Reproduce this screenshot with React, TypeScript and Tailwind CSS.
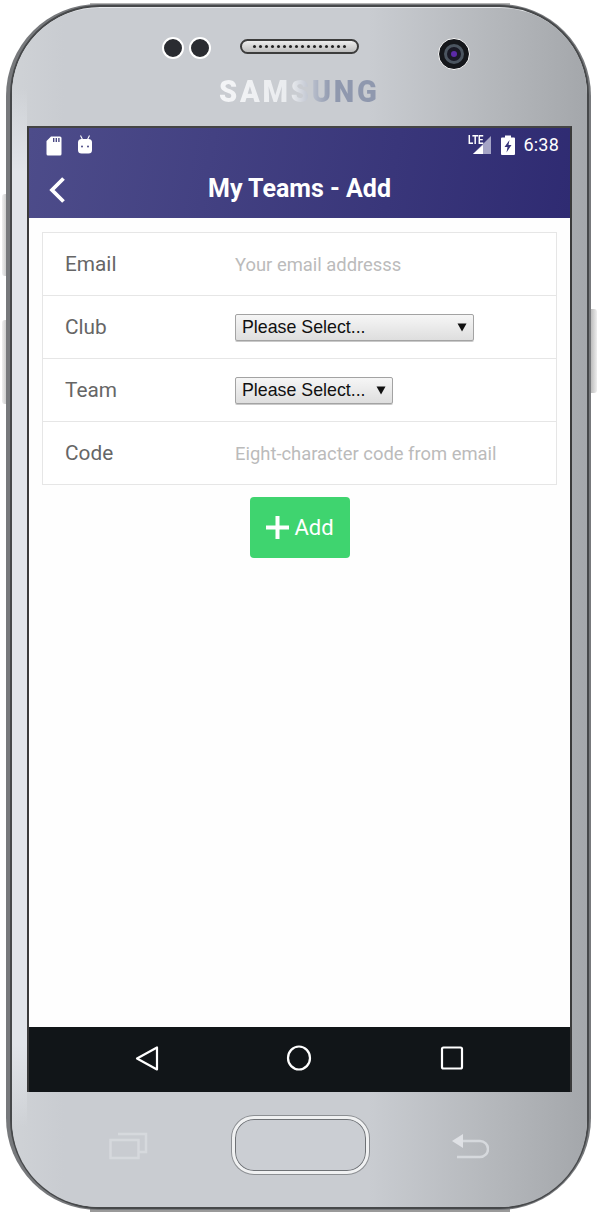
import React from "react";

const roboto = "font-['Roboto',sans-serif]";

function StatusBar() {
  return (
    <div className="flex h-[34px] items-center pl-[17px] pr-[11px]">
      <svg width="16" height="20" viewBox="0 0 16 20" className="mt-[1px]">
        <path d="M5 0.5h9a1.5 1.5 0 0 1 1.5 1.5v16a1.5 1.5 0 0 1-1.5 1.5H2A1.5 1.5 0 0 1 .5 18V5z" fill="#fff" />
        <path d="M7 2h1.4v4H7zM9.6 2H11v4H9.6zM12.2 2h1.4v4h-1.4z" fill="#4a4984" />
      </svg>
      <svg width="16" height="20" viewBox="0 0 16 20" className="ml-[15px]">
        <path d="M3.5 0.5l2 4h5l2-4" stroke="#fff" strokeWidth="1.1" fill="none" />
        <rect x="1" y="4" width="14" height="14.5" rx="3.5" fill="#fff" />
        <circle cx="5" cy="11.5" r="1" fill="#4a4984" />
        <circle cx="11" cy="11.5" r="1" fill="#4a4984" />
      </svg>
      <div className="relative ml-auto h-[20px] w-[26px]">
        <svg width="26" height="20" viewBox="0 0 26 20">
          <path d="M25 1v18H7z" fill="#a5a4c6" />
          <path d="M17 10v9H7z" fill="#fff" />
        </svg>
        <span className="absolute left-[2px] top-[-1px] origin-left scale-x-[0.8] text-[12px] leading-[13px] font-bold text-white font-['Roboto',sans-serif]">
          LTE
        </span>
      </div>
      <svg width="14" height="20" viewBox="0 0 14 20" className="ml-[9px]">
        <path d="M4 0.5h6v2h3a1 1 0 0 1 1 1V19a1 1 0 0 1-1 1H1a1 1 0 0 1-1-1V3.500a1 1 0 0 1 1-1h3z" fill="#fff" />
        <path d="M8.500 5L3.500 12h3l-1 5.500 5-7.500h-3z" fill="#37347a" />
      </svg>
      <span className={`ml-[8px] text-[18px] leading-none tracking-[0.2px] text-white ${roboto}`}>6:38</span>
    </div>
  );
}

function Row({ label, last, children }: { label: string; last?: boolean; children: React.ReactNode }) {
  return (
    <div className={`flex items-center pl-[22px] ${last ? "h-[62px]" : "h-[63px] border-b border-[#e6e6e6]"}`}>
      <span className={`w-[170px] pt-[2px] text-[20.800px] text-[#666] ${roboto}`}>{label}</span>
      {children}
    </div>
  );
}

function FakeSelect({ width }: { width: string }) {
  return (
    <div className={`relative h-[27px] ${width}`}>
      <select className="h-full w-full appearance-none rounded-[2px] border border-[#a3a3a3] bg-[linear-gradient(180deg,#f6f6f6,#dedede)] pb-[2px] pl-[6px] text-[17.800px] leading-[24px] text-[#111] font-['Liberation_Sans',sans-serif] shadow-[0_1px_0_#c9c9c9]">
        <option>Please Select...</option>
      </select>
      <svg width="10" height="9" viewBox="0 0 10 9" className="absolute right-[7px] top-[9px]">
        <path d="M0.500 0.500h9L5 8.500z" fill="#111" />
      </svg>
    </div>
  );
}

function Screen() {
  return (
    <div className="ml-[15px] flex h-[966px] w-[545px] flex-col overflow-hidden border-x-2 border-t-2 border-x-[#3a3a3a] border-t-[#444] bg-white">
      <div className="h-[90px] bg-[linear-gradient(100deg,#4d4c8a,#2f2b72)]">
        <StatusBar />
        <div className="relative flex h-[56px] items-center justify-center pb-[2px]">
          <svg width="18" height="28" viewBox="0 0 18 28" className="absolute left-[19px] top-[14px]">
            <path d="M15.500 2.500L4 14l11.500 11.500" stroke="#fff" strokeWidth="3.800" fill="none" />
          </svg>
          <span className={`text-[25px] font-bold text-white ${roboto}`}>My Teams - Add</span>
        </div>
      </div>

      <div className="flex-1 bg-[#fefefe] px-[13px] pt-[14px]">
        <div className="border border-[#e6e6e6] bg-white">
          <Row label="Email">
            <span className={`pt-[2px] text-[18.400px] text-[#bbb] ${roboto}`}>Your email addresss</span>
          </Row>
          <Row label="Club">
            <FakeSelect width="w-[239px]" />
          </Row>
          <Row label="Team">
            <FakeSelect width="w-[158px]" />
          </Row>
          <Row label="Code" last>
            <span className={`pt-[2px] text-[18.400px] text-[#bbb] ${roboto}`}>Eight-character code from email</span>
          </Row>
        </div>
        <div className="mt-[12px] flex justify-center">
          <button className={`flex h-[61px] w-[100px] items-center justify-center gap-[5px] rounded-[4px] bg-[#3fd46f] pl-[1px] text-[22px] text-white ${roboto}`}>
            <svg width="23" height="23" viewBox="0 0 23 23">
              <path d="M11.500 0v23M0 11.500h23" stroke="#fff" strokeWidth="4" />
            </svg>
            Add
          </button>
        </div>
      </div>

      <div className="flex h-[65px] items-center bg-[#111518]">
        <svg width="541" height="65" viewBox="0 0 541 65">
          <path d="M128 20.500v22L108 31.500z" stroke="#fff" strokeWidth="2.200" strokeLinejoin="round" fill="none" />
          <ellipse cx="270" cy="31" rx="11" ry="11.500" stroke="#fff" strokeWidth="2.200" fill="none" />
          <rect x="413" y="20.500" width="20" height="21" rx="1.500" stroke="#fff" strokeWidth="2.200" fill="none" />
        </svg>
      </div>
    </div>
  );
}

export default function App() {
  return (
    <div className="relative h-[1218px] w-[599px] overflow-hidden bg-white">
      {/* side keys */}
      <div className="absolute left-[2px] top-[194px] h-[82px] w-[6px] rounded-l-[3px] bg-[linear-gradient(90deg,#f0f0f0,#bdbdbd)]" />
      <div className="absolute left-[2px] top-[320px] h-[84px] w-[6px] rounded-l-[3px] bg-[linear-gradient(90deg,#f0f0f0,#bdbdbd)]" />
      <div className="absolute left-[591px] top-[309px] h-[84px] w-[6px] rounded-r-[3px] bg-[linear-gradient(90deg,#bdbdbd,#eeeeee)]" />
      <div className="absolute left-[90px] top-[1208px] h-[4px] w-[420px] bg-[#9a9a9a]" />
      <div className="absolute left-[90px] top-[3px] h-[3px] w-[420px] bg-[#b4b4b4]" />

      <div className="relative ml-[6px] mt-[4px] h-[1206px] w-[585px] rounded-[92px] bg-[#77797c] pb-[1px] pl-[4px] pr-[2px] pt-[1px]">
        <div className="h-full w-full rounded-[90px] border-[2px] border-[#46484a] bg-[#e6e8eb] pt-[1px]">
          <div className="relative h-full w-full overflow-hidden rounded-[86px] bg-[linear-gradient(90deg,#cfd2d6_0%,#c9ccd1_9%,#c9ccd1_62%,#b3b6ba_85%,#a4a7ab_100%)]">
            {/* light edge of the glass on the left */}
            <div className="absolute bottom-[80px] left-0 top-[80px] w-[15px] bg-[linear-gradient(180deg,transparent,#e1e4e9_8%,#e1e4e9_92%,transparent)]" />

            {/* top bezel */}
            <div className="relative h-[118px]">
              <div className="flex pl-[150px] pt-[23px]">
                <div className="mt-[6px] h-[22px] w-[22px] rounded-full border-2 border-white bg-[#2a2c31]" />
                <div className="ml-[5px] mt-[6px] h-[22px] w-[22px] rounded-full border-2 border-white bg-[#2a2c31]" />
                <div className="ml-[29px] mt-[8px] flex h-[15px] w-[119px] items-center justify-center gap-[3px] rounded-full border-2 border-[#3c3c3c] bg-[linear-gradient(180deg,#ededed,#bdbdbd)]">
                  {Array.from({ length: 16 }).map((_, i) => (
                    <span key={i} className="h-[3px] w-[3px] rounded-full bg-[#222]" />
                  ))}
                </div>
                <div className="ml-[79px] mt-[7px] flex h-[32px] w-[32px] items-center justify-center rounded-full border border-white bg-[#15171b]">
                  <div className="flex h-[20px] w-[20px] items-center justify-center rounded-full border-[3px] border-[#4b5560] bg-[#1a1a26]">
                    <div className="h-[6px] w-[6px] rounded-full bg-[#5c2aa8]" />
                  </div>
                </div>
              </div>
              <div className="mt-[5px] flex justify-center">
                <span className="scale-x-[0.91] bg-[linear-gradient(90deg,#f4f5f7_0%,#e9ebee_45%,#8f98ae_70%,#8f98ae_100%)] bg-clip-text text-[32px] font-black leading-[32px] tracking-[3px] text-transparent font-['Roboto',sans-serif]">
                  SAMSUNG
                </span>
              </div>
            </div>

            <div className="relative">
              <Screen />
            </div>

            {/* bottom bezel */}
            <div className="relative flex items-start justify-center pl-[2px] pt-[24px]">
              <svg width="40" height="28" viewBox="0 0 40 28" className="absolute left-[97px] top-[40px]">
                <path d="M1.500 8h28v18h-28zM9 2h28v18h-7" stroke="#d6d9dd" strokeWidth="2.500" fill="none" />
              </svg>
              <div className="h-[58px] w-[137px] rounded-[22px] border-[3px] border-[#f0f1f2] bg-[#cbced3] shadow-[0_0_0_1px_#8c8f93,inset_0_0_0_1px_#6f7276]" />
              <svg width="38" height="26" viewBox="0 0 38 26" className="absolute left-[439px] top-[41px]">
                <path d="M4 8h25a8 8 0 0 1 0 16H6" stroke="#d6d9dd" strokeWidth="2.500" fill="none" />
                <path d="M12 1v14L1 8z" fill="#dfe1e5" />
              </svg>
            </div>
          </div>
        </div>
      </div>
    </div>
  );
}
